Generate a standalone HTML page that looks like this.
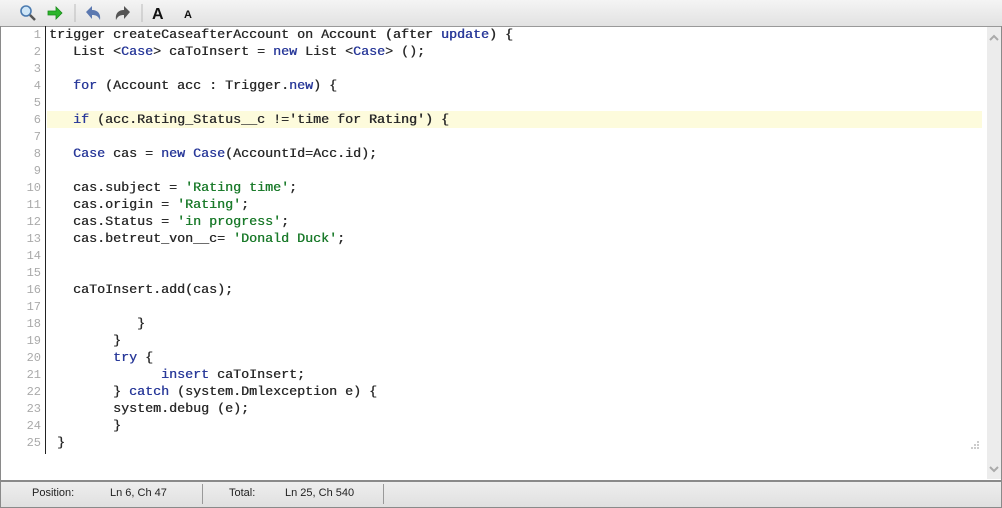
<!DOCTYPE html>
<html><head><style>
body{margin:0;width:1002px;height:507px;position:relative;background:#fff;overflow:hidden;font-family:"Liberation Sans",sans-serif}
#tb{position:absolute;left:0;top:0;width:1002px;height:26px;background:linear-gradient(#f4f4f4,#e2e2e2);border-bottom:1px solid #999}
#ed{position:absolute;left:0;top:26px;width:1000px;height:454px;border-left:1px solid #8a8a8a;border-right:1px solid #8a8a8a}
#gut{position:absolute;left:0;top:0;width:44px;height:428px;border-right:1px solid #222}
.ln{position:absolute;left:0;width:40px;text-align:right;font:12px "Liberation Mono",monospace;color:#aaa;height:17px;line-height:17px}
.cl{position:absolute;left:48px;font:13.33px "Liberation Mono",monospace;color:#2a2a2a;white-space:pre;height:17px;line-height:17px;text-shadow:0.4px 0 0 currentColor}
.k{color:#2a3a9a}.s{color:#1a7a2a}
#hl{position:absolute;left:46px;top:85px;width:935px;height:17px;background:#fdfbdc}
#sb{position:absolute;left:986px;top:1px;width:14px;height:452px;background:#ececec}
#st{position:absolute;left:0;top:480px;width:1000px;height:25px;border:1px solid #8a8a8a;border-top:2px solid #8a8a8a;background:linear-gradient(#eee,#e0e0e0);font-size:11px;color:#222}
#st span{position:absolute;top:5px}
.sep{position:absolute;top:2px;width:1px;height:20px;background:#999}
</style></head><body>
<div id="tb">
<svg width="200" height="26" style="position:absolute;left:0;top:0">
<circle cx="26" cy="11" r="5" fill="#cfe6f7" stroke="#4a7ab0" stroke-width="1.6"/><line x1="30" y1="15" x2="35" y2="20" stroke="#555" stroke-width="2.5"/>
<path d="M48 11h8v-4l6 6-6 6v-4h-8z" fill="#2cb52c" stroke="#1a8a1a" stroke-width="0.8"/>
<line x1="75" y1="4" x2="75" y2="22" stroke="#bbb"/>
<path d="M86 12l6-6v4c6 0 9 4 8 10-2-4-4-5-8-5v4z" fill="#5b78b0"/>
<path d="M130 12l-6-6v4c-6 0-9 4-8 10 2-4 4-5 8-5v4z" fill="#555"/>
<line x1="142" y1="4" x2="142" y2="22" stroke="#bbb"/>
<text x="152" y="19" font-family="Liberation Sans" font-weight="bold" font-size="16" fill="#111">A</text>
<text x="184" y="18" font-family="Liberation Sans" font-weight="bold" font-size="11" fill="#111">A</text>
</svg>
</div>
<div id="ed">
<div id="hl"></div>
<div id="gut"></div>
<div id="lines"></div>
<div id="sb"><svg width="14" height="452"><path d="M3 13l4-4 4 4" stroke="#aaa" stroke-width="2" fill="none"/><path d="M3 440l4 4 4-4" stroke="#aaa" stroke-width="2" fill="none"/></svg></div>
<svg width="10" height="10" style="position:absolute;left:970px;top:414px"><rect x="6" y="1" width="2" height="2" fill="#ccc"/><rect x="3" y="4" width="2" height="2" fill="#ccc"/><rect x="6" y="4" width="2" height="2" fill="#ccc"/><rect x="0" y="7" width="2" height="2" fill="#ccc"/><rect x="3" y="7" width="2" height="2" fill="#ccc"/><rect x="6" y="7" width="2" height="2" fill="#ccc"/></svg>
</div>
<div id="st">
<span style="left:31px">Position:</span><span style="left:109px">Ln 6, Ch 47</span>
<div class="sep" style="left:201px"></div>
<span style="left:228px">Total:</span><span style="left:284px">Ln 25, Ch 540</span>
<div class="sep" style="left:382px"></div>
</div>
<script>
var L=[
'trigger createCaseafterAccount on Account (after <k>update</k>) {',
'   List <<k>Case</k>> caToInsert = <k>new</k> List <<k>Case</k>> ();',
'',
'   <k>for</k> (Account acc : Trigger.<k>new</k>) {',
'',
'   <k>if</k> (acc.Rating_Status__c !=\'time for Rating\') {',
'',
'   <k>Case</k> cas = <k>new</k> <k>Case</k>(AccountId=Acc.id);',
'',
'   cas.subject = <s>\'Rating time\'</s>;',
'   cas.origin = <s>\'Rating\'</s>;',
'   cas.Status = <s>\'in progress\'</s>;',
'   cas.betreut_von__c= <s>\'Donald Duck\'</s>;',
'','',
'   caToInsert.add(cas);',
'',
'           }',
'        }',
'        <k>try</k> {',
'              <k>insert</k> caToInsert;',
'        } <k>catch</k> (system.Dmlexception e) {',
'        system.debug (e);',
'        }',
' }'];
var h='';
L.forEach(function(t,i){var y=i*17+1;
t=t.replace(/</g,'&lt;').replace(/&lt;k>/g,'<span class="k">').replace(/&lt;\/k>/g,'</span>').replace(/&lt;s>/g,'<span class="s">').replace(/&lt;\/s>/g,'</span>');
h+='<div class="ln" style="top:'+y+'px">'+(i+1)+'</div><div class="cl" style="top:'+y+'px">'+t+'</div>';});
document.getElementById('lines').innerHTML=h;
</script>
</body></html>
